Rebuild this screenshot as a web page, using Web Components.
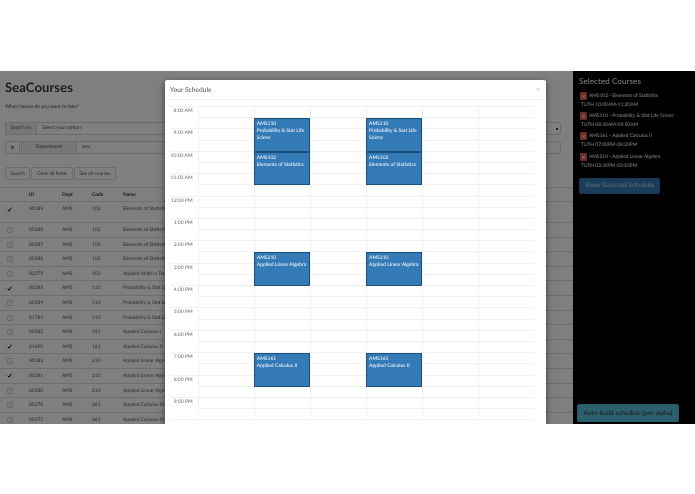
<!DOCTYPE html>
<html lang="en">
<head>
<meta charset="utf-8">
<title>SeaCourses</title>
<style>
    body { margin: 0; background: #fff; }
</style>
</head>
<body>
<sea-app></sea-app>
<script>
// Form at the top of the page
class CourseSearch extends HTMLElement {
    constructor() {
        super();
        this.attachShadow({ mode: 'open' });
        this.shadowRoot.innerHTML = `
            <style>
                :host { display: block; padding: 0 12px 0 5px; color: #333; }
                h1 { margin: 0; padding-top: 8px; font-size: 13px; line-height: 16px; font-weight: 700; letter-spacing: .1px; }
                p { margin: 0; padding-top: 8px; font-size: 4.9px; line-height: 8px; color: #444; }
                .group { display: flex; height: 13px; line-height: 11px; font-size: 4.9px; color: #555; }
                .group.first { margin-top: 11px; }
                .group.second { margin-top: 6px; }
                .addon { background: #eee; border: 1px solid #d6d6d6; text-align: center; box-sizing: border-box; }
                .addon.by { width: 32px; }
                .addon.dept { width: 56px; }
                .remove { width: 15px; border: 1px solid #d6d6d6; box-sizing: border-box; text-align: center; font-size: 8px; color: #222; background: #fff; margin-right: 1px; }
                .field { flex: 1; border: 1px solid #d6d6d6; border-left: 0; box-sizing: border-box; padding-left: 5px; border-radius: 0 3px 3px 0; display: flex; align-items: center; justify-content: space-between; }
                .dot { width: 2px; height: 2px; border-radius: 50%; background: #000; margin-right: 2px; }
                .actions { display: flex; gap: 1px; margin-top: 13px; }
                button { height: 13px; padding: 0; border: 1px solid #d6d6d6; border-radius: 2px; background: #fff; font: inherit; font-size: 4.9px; color: #555; text-rendering: inherit; }
            </style>
            <h1>SeaCourses</h1>
            <p>What classes do you want to take?</p>
            <div class="group first">
                <span class="addon by">Search by</span>
                <span class="field">Select your option<i class="dot"></i></span>
            </div>
            <div class="group second">
                <span class="remove">×</span>
                <span class="addon dept">Department</span>
                <span class="field">ams</span>
            </div>
            <div class="actions">
                <button style="width:25px">Search</button>
                <button style="width:42px">Clear all fields</button>
                <button style="width:42px">See all courses</button>
            </div>
        `;
    }
}

// Table of the courses found
class CourseTable extends HTMLElement {
    constructor() {
        super();
        this.attachShadow({ mode: 'open' });
        const stat = 'Elements of Statistics';
        const prob = 'Probability & Stat Life Scienc';
        const lin = 'Applied Linear Algebra';
        const rows = [
            ['80389', '102', stat, true],
            ['80388', '102', stat],
            ['80387', '102', stat],
            ['80386', '102', stat],
            ['82379', '103', 'Applied Math in Tech'],
            ['80385', '110', prob, true],
            ['80384', '110', prob],
            ['81784', '110', prob],
            ['80383', '151', 'Applied Calculus I'],
            ['81690', '161', 'Applied Calculus II', true],
            ['80382', '210', lin],
            ['80381', '210', lin, true],
            ['80380', '210', lin],
            ['80378', '261', 'Applied Calculus III'],
            ['80377', '261', 'Applied Calculus III']
        ];
        const check = `<svg viewBox="0 0 6 6" width="5" height="5"><path d="M1 3.2 2.4 5 5.2 .8" fill="none" stroke="#000" stroke-width="1.2"/></svg>`;
        const body = rows.map(r => `
            <div class="row${r[3] ? ' on' : ''}">
                <span class="box">${r[3] ? check : '<i></i>'}</span>
                <span>${r[0]}</span><span>AMS</span><span>${r[1]}</span><span>${r[2]}</span>
            </div>`).join('');
        this.shadowRoot.innerHTML = `
            <style>
                :host { display: block; margin-top: 7px; font-size: 4.9px; color: #555; }
                .row { display: grid; grid-template-columns: 29px 33px 30px 31px 1fr; height: 14.6px; line-height: 14px; border-top: .6px solid #ddd; box-sizing: border-box; }
                .head { font-weight: 700; height: 14px; color: #333; }
                .head + .row { height: 21px; }
                .box { display: flex; align-items: center; padding-left: 7px; height: 14px; }
                .box i { width: 4px; height: 4px; border: .6px solid #d0d0d0; border-radius: 1px; background: #f4f4f4; }
            </style>
            <div class="row head"><span></span><span>ID</span><span>Dept</span><span>Code</span><span>Name</span></div>
            ${body}
        `;
    }
}

// One entry of the sidebar list
class SelectedCourse extends HTMLElement {
    constructor() {
        super();
        this.attachShadow({ mode: 'open' });
        this.shadowRoot.innerHTML = `
            <style>
                :host { display: block; height: 20.2px; font-size: 4.9px; color: #fff; }
                .top { display: flex; align-items: center; gap: 2px; height: 8px; }
                .x { flex: none; width: 7px; height: 8px; background: #d9534f; border-radius: 1px; color: #fff; font-size: 8px; line-height: 8px; text-align: center; }
                .time { padding: 2px 0 0 1px; line-height: 7px; }
            </style>
            <div class="top"><span class="x">×</span><slot></slot></div>
            <div class="time">${this.getAttribute('time')}</div>
        `;
    }
}

// Black column on the right
class SelectedPanel extends HTMLElement {
    constructor() {
        super();
        this.attachShadow({ mode: 'open' });
        this.shadowRoot.innerHTML = `
            <style>
                :host { display: flex; flex-direction: column; background: #000; color: #fff; box-sizing: border-box; padding: 4px 16px 2px 6px; height: 100%; }
                h2 { margin: 0; font-size: 8px; line-height: 12px; font-weight: 400; height: 17px; letter-spacing: .1px; white-space: nowrap; }
                .list { padding-left: 1px; white-space: nowrap; }
                button { border: 1px solid transparent; border-radius: 2px; font: inherit; padding: 0; text-rendering: inherit; }
                .show { width: 81px; height: 16px; margin-top: 5px; background: #337ab7; border-color: #2e6da4; color: #bcd6ee; font-size: 6.5px; }
                .auto { width: 102px; height: 18px; margin: auto 0 0 -2px; background: #5bc0de; border-color: #46b8da; color: #333; font-size: 6.5px; white-space: nowrap; }
            </style>
            <h2>Selected Courses</h2>
            <div class="list"><slot></slot></div>
            <button class="show">Show Selected Schedule</button>
            <button class="auto">Auto-build schedule (pre-alpha)</button>
        `;
    }
}

// Week grid, half hour rows, 8 AM to 10 PM
class WeekCalendar extends HTMLElement {
    constructor() {
        super();
        this.attachShadow({ mode: 'open' });
        const hours = ['8:00 AM', '9:00 AM', '10:00 AM', '11:00 AM', '12:00 PM', '1:00 PM', '2:00 PM', '3:00 PM', '4:00 PM', '5:00 PM', '6:00 PM', '7:00 PM', '8:00 PM', '9:00 PM'];
        let cells = '';
        hours.forEach((h, i) => {
            cells += `<div class="time" style="grid-row:${i * 2 + 1} / span 2">${h}</div>`;
        });
        for (let r = 1; r <= 28; r++) {
            for (let c = 2; c <= 7; c++) {
                cells += `<div class="cell" style="grid-row:${r};grid-column:${c}"></div>`;
            }
        }
        const events = [
            [2, 'AMS110', 'Probability & Stat Life Scienc'],
            [5, 'AMS102', 'Elements of Statistics'],
            [14, 'AMS210', 'Applied Linear Algebra'],
            [23, 'AMS161', 'Applied Calculus II']
        ];
        [3, 5].forEach(col => {
            events.forEach(e => {
                cells += `<div class="event" style="grid-row:${e[0]} / span 3;grid-column:${col}"><div>${e[1]}</div><div>${e[2]}</div></div>`;
            });
        });
        this.shadowRoot.innerHTML = `
            <style>
                :host { display: block; font-size: 5px; }
                .grid { display: grid; grid-template-columns: 27.6px repeat(6, 56.17px); grid-template-rows: repeat(28, 11.2px); border-top: 1px solid #f2f2f2; box-sizing: border-box; width: 365px; }
                .time { grid-column: 1; color: #666; text-align: right; padding: 1px 5px 0 0; line-height: 6px; white-space: nowrap; border-bottom: 1px solid #f2f2f2; }
                .cell { border-left: 1px solid #f2f2f2; border-bottom: 1px solid #f2f2f2; box-sizing: border-box; }
                .event { z-index: 1; background: #337ab7; border: 1px solid #1d4f7c; box-sizing: border-box; color: #fff; padding: 2px 2px 0 2px; line-height: 7px; overflow: hidden; }
            </style>
            <div class="grid">${cells}</div>
        `;
    }
}

// Dialog with the schedule, clipped by the bottom of the stage
class ScheduleModal extends HTMLElement {
    constructor() {
        super();
        this.attachShadow({ mode: 'open' });
        this.shadowRoot.innerHTML = `
            <style>
                :host { position: absolute; left: 165px; top: 9px; width: 381px; background: #fff; border-radius: 2px; box-shadow: 0 2px 6px rgba(0,0,0,.55); color: #333; z-index: 2; height: 360px; }
                header { display: flex; justify-content: space-between; align-items: center; height: 20px; box-sizing: border-box; padding: 0 6px 0 5px; border-bottom: 1px solid #f2f2f2; font-size: 6.7px; color: #555; }
                .close { color: #ccc; font-size: 7px; }
                .body { padding: 6px 0 0 5px; }
            </style>
            <header><span>Your Schedule</span><span class="close">×</span></header>
            <div class="body"><slot></slot></div>
        `;
    }
}

class SeaApp extends HTMLElement {
    constructor() {
        super();
        this.attachShadow({ mode: 'open' });
        this.shadowRoot.innerHTML = `
            <style>
                :host { display: block; padding: 71px 0 70px; font-family: Lato, "Open Sans", sans-serif; text-rendering: geometricPrecision; }
                .stage { position: relative; height: 353px; overflow: hidden; display: grid; grid-template-columns: 573px 122px; background: #fff; filter: blur(.3px); }
                .main { overflow: hidden; }
                .backdrop { position: absolute; inset: 0; background: rgba(0,0,0,.5); z-index: 1; }
            </style>
            <div class="stage">
                <div class="main">
                    <course-search></course-search>
                    <course-table></course-table>
                </div>
                <selected-panel>
                    <selected-course time="TUTH 10:00AM-11:20AM">AMS102 - Elements of Statistics</selected-course>
                    <selected-course time="TUTH 08:30AM-09:50AM">AMS110 - Probability &amp; Stat Life Scienc</selected-course>
                    <selected-course time="TUTH 07:00PM-08:20PM">AMS161 - Applied Calculus II</selected-course>
                    <selected-course time="TUTH 02:30PM-03:50PM">AMS210 - Applied Linear Algebra</selected-course>
                </selected-panel>
                <div class="backdrop"></div>
                <schedule-modal><week-calendar></week-calendar></schedule-modal>
            </div>
        `;
    }
}

customElements.define('course-search', CourseSearch);
customElements.define('course-table', CourseTable);
customElements.define('selected-course', SelectedCourse);
customElements.define('selected-panel', SelectedPanel);
customElements.define('week-calendar', WeekCalendar);
customElements.define('schedule-modal', ScheduleModal);
customElements.define('sea-app', SeaApp);
</script>
</body>
</html>
